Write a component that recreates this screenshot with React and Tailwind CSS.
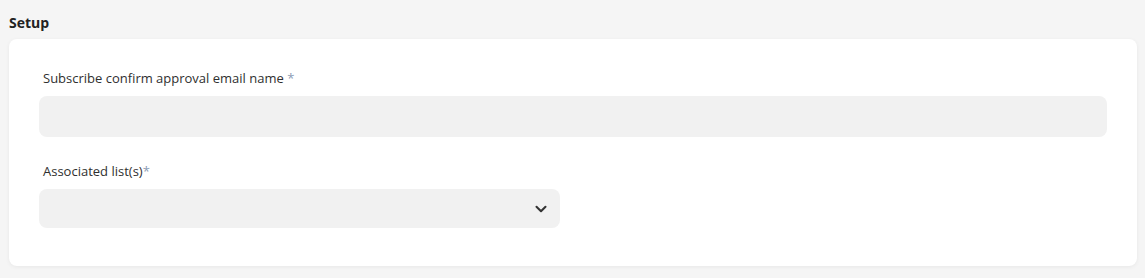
import { ChevronDown } from "lucide-react";

export default function App() {
  return (
    <main
      className="w-[1145px] h-[278px] bg-[#f5f5f5] px-[9px] pt-[14px] text-[#2b2b2b]"
      style={{ fontFamily: '"Open Sans", "Liberation Sans", sans-serif' }}
    >
      {/* Title */}
      <h2 className="text-[14px] font-bold leading-[18px] mb-[7px] text-[#222]">Setup</h2>

      {/* Card */}
      <div className="w-[1128px] h-[227px] bg-white rounded-[8px] shadow-[0_1px_4px_rgba(0,0,0,0.06)] px-[30px] pt-[31px]">
        <label className="block pl-[4px] text-[13px] leading-[16px] text-[#2f2f2f]">
          Subscribe confirm approval email name{" "}
          <span className="text-[#8b9bb4]">*</span>
        </label>
        <input
          type="text"
          className="mt-[10px] block w-[1068px] h-[41px] rounded-[8px] bg-[#f1f1f1] outline-none px-3"
        />

        <label className="mt-[26px] block pl-[4px] text-[13px] leading-[16px] text-[#2f2f2f]">
          Associated list(s)<span className="text-[#8b9bb4]">*</span>
        </label>
        <div className="mt-[10px] w-[521px] h-[39px] rounded-[8px] bg-[#f1f1f1] flex items-center justify-end pr-[10px]">
          <ChevronDown size={18} strokeWidth={2.75} className="text-[#333]" />
        </div>
      </div>
    </main>
  );
}
